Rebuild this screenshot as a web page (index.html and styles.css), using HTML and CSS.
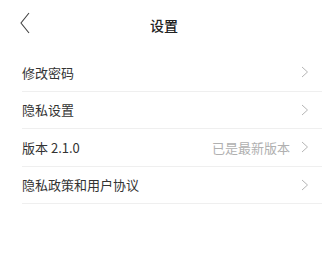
FILE: index.html
```html
<!DOCTYPE html>
<html lang="zh-CN">
<head>
<meta charset="utf-8">
<link rel="stylesheet" href="styles.css">
</head>
<body>
<header class="nav">
  <span class="back">
    <svg width="10" height="22" viewBox="0 0 10 22"><polyline points="9,1 1,11 9,21" fill="none" stroke="#444" stroke-width="1.1"/></svg>
  </span>
  <h1 class="title">设置</h1>
</header>
<ul class="list">
  <li class="row"><span class="label">修改密码</span><span class="arrow"><svg width="8" height="12" viewBox="0 0 8 12"><polyline points="1,1 6.5,6 1,11" fill="none" stroke="#b5b5b5" stroke-width="1"/></svg></span></li>
  <li class="row"><span class="label">隐私设置</span><span class="arrow"><svg width="8" height="12" viewBox="0 0 8 12"><polyline points="1,1 6.5,6 1,11" fill="none" stroke="#b5b5b5" stroke-width="1"/></svg></span></li>
  <li class="row"><span class="label">版本 2.1.0</span><span class="value">已是最新版本</span><span class="arrow"><svg width="8" height="12" viewBox="0 0 8 12"><polyline points="1,1 6.5,6 1,11" fill="none" stroke="#b5b5b5" stroke-width="1"/></svg></span></li>
  <li class="row"><span class="label">隐私政策和用户协议</span><span class="arrow"><svg width="8" height="12" viewBox="0 0 8 12"><polyline points="1,1 6.5,6 1,11" fill="none" stroke="#b5b5b5" stroke-width="1"/></svg></span></li>
</ul>
</body>
</html>
```
FILE: styles.css
```css
html, body {
  margin: 0;
  padding: 0;
  background: #fff;
}
body {
  font-family: "Noto Sans CJK SC", "Noto Sans", sans-serif;
  color: #333;
  width: 322px;
}
.nav {
  height: 46px;
  display: flex;
  align-items: center;
  position: relative;
}
.back {
  position: absolute;
  left: 20px;
  top: 12px;
  display: flex;
}
.title {
  flex: 1;
  margin: 0;
  padding-left: 6px;
  text-align: center;
  font-size: 14px;
  font-weight: 500;
  color: #222;
  line-height: 1;
  padding-top: 4px;
}
.list {
  list-style: none;
  margin: 8px 0 0 22px;
  padding: 0;
}
.row {
  height: 36.5px;
  border-bottom: 1px solid #efefef;
  display: flex;
  align-items: center;
  padding-right: 13px;
}
.label {
  flex: 1;
  font-size: 13px;
  color: #333;
}
.value {
  font-size: 13px;
  color: #b0b0b0;
  margin-right: 11px;
}
.arrow {
  display: flex;
  width: 8px;
}
```
